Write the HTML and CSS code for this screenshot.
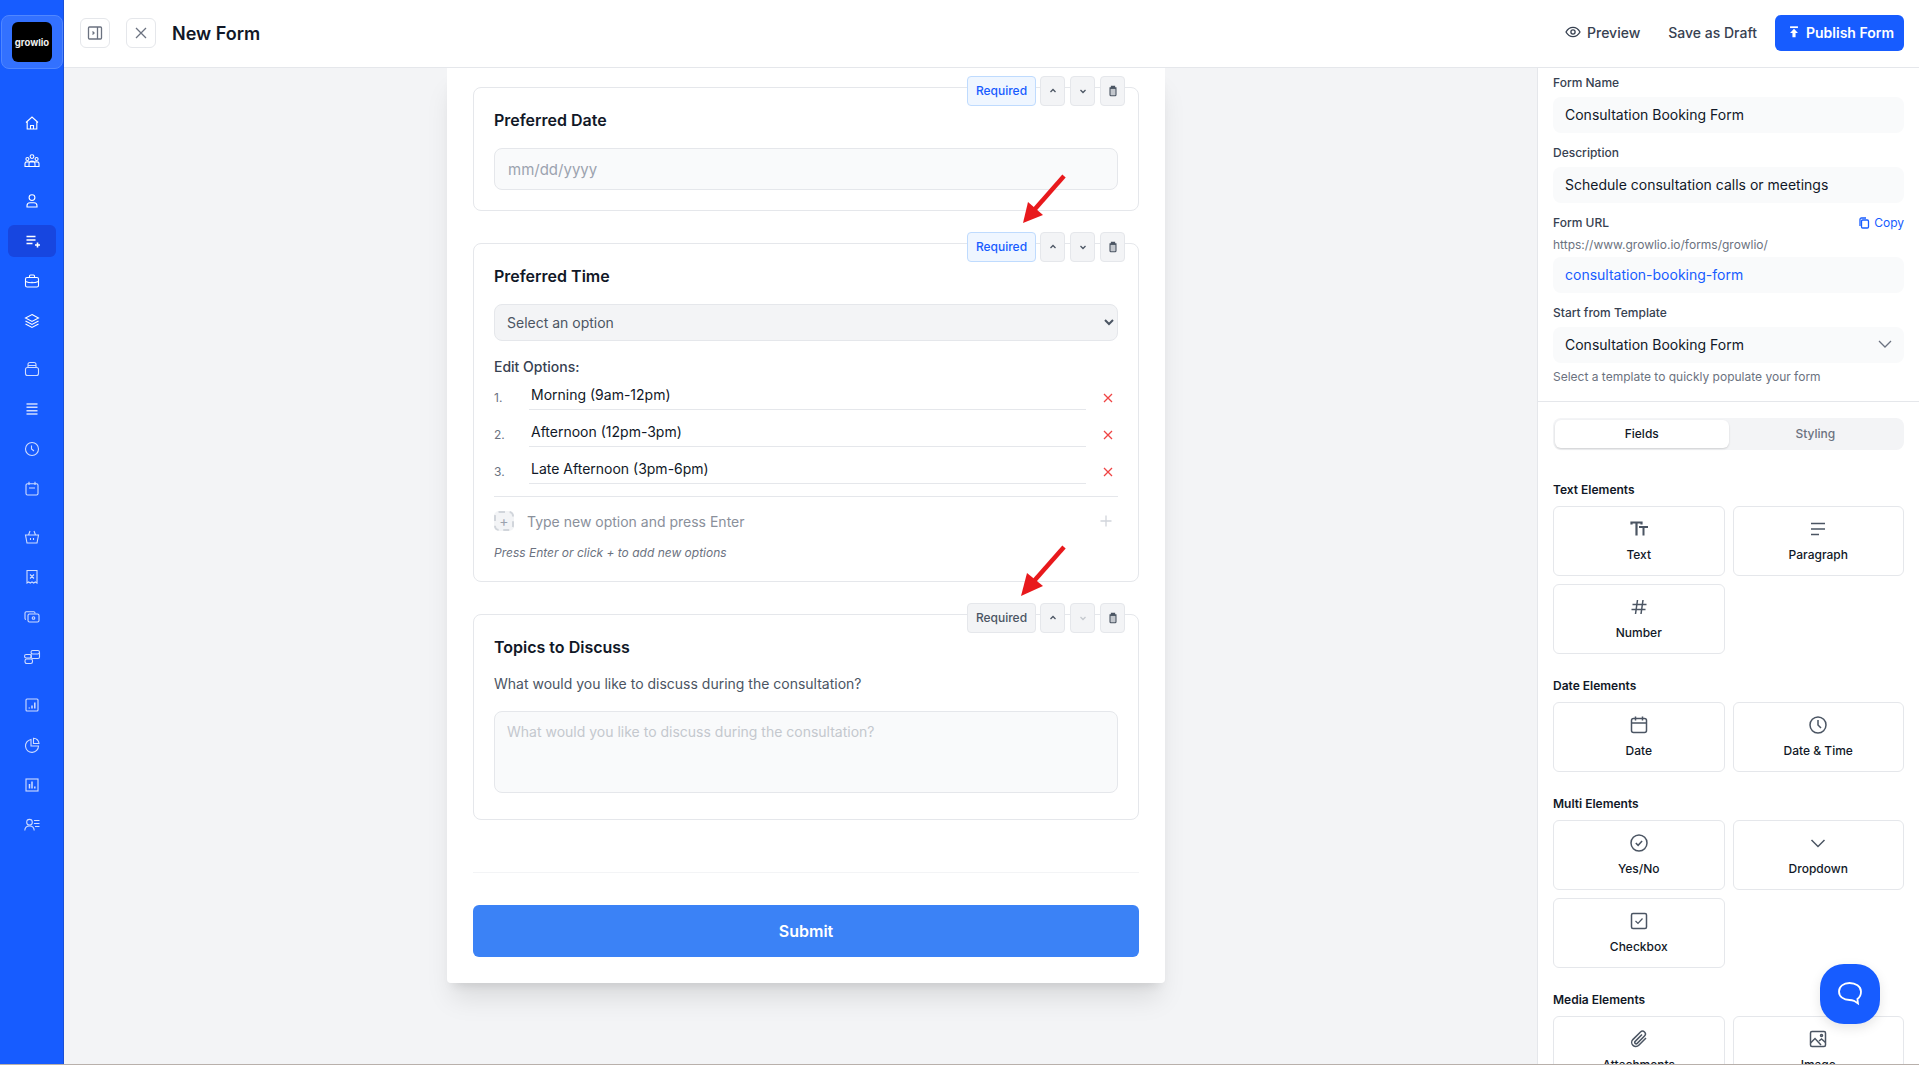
FILE: index.html
```html
<!DOCTYPE html>
<html lang="en">
<head>
    <meta charset="UTF-8">
    <meta name="viewport" content="width=device-width, initial-scale=1.0">
    <title>New Form</title>
    <link rel="stylesheet" href="styles.css">
</head>
<body>
<div class="app">
    <aside class="sidebar">
        <div class="logo-box"><div class="logo">growlio</div></div>
        <nav class="nav">
            <div class="nav-group">
                <a class="nav-item"><svg viewBox="0 -2 16 16"><path d="M2 7.500 8 2l6 5.500M3.200 6.500V14h9.600V6.500M6.500 14v-3.500h3V14"/></svg></a>
                <a class="nav-item"><svg viewBox="0 0 16 16"><circle cx="8" cy="3.600" r="1.900"/><circle cx="3.400" cy="6" r="1.500"/><circle cx="12.600" cy="6" r="1.500"/><path d="M1 13.500V10.500q0-1.600 2-1.600h10q2 0 2 1.600v3zM5 13.500v-2.200Q5 8 8 8t3 3.300v2.200"/></svg></a>
                <a class="nav-item"><svg viewBox="0 0 16 16"><circle cx="8" cy="4.600" r="2.900"/><path d="M3 14v-1.200Q3 9.800 6 9.800h4q3 0 3 3V14z"/></svg></a>
                <a class="nav-item nav-active"><svg viewBox="0 0 16 16"><path d="M2.500 3.500h9M2.500 7h9M2.500 10.500h6M11 12h5M13.500 9.500v5" stroke-width="1.600"/></svg></a>
                <a class="nav-item"><svg viewBox="0 0 16 16"><rect x="1.500" y="4.500" width="13" height="9.500" rx="1.600"/><path d="M5.500 4.500V3q0-1 1-1h3q1 0 1 1v1.500M1.500 8.500q6.500 2.500 13 0M8 8.800v1"/></svg></a>
                <a class="nav-item"><svg viewBox="0 0 16 16"><path d="M8 1.500 14.500 5 8 8.500 1.500 5zM1.500 8 8 11.500 14.500 8M1.500 11 8 14.500 14.500 11"/></svg></a>
            </div>
            <div class="nav-group nav-dim">
                <a class="nav-item"><svg viewBox="0 0 16 16"><rect x="1.500" y="6.500" width="13" height="8" rx="2"/><path d="M4 6.500V3.500q0-2 2-2h4q2 0 2 2v3M4 4.500h8"/></svg></a>
                <a class="nav-item"><svg viewBox="0 0 16 16"><path d="M2.500 3h11M2.500 6.300h11M2.500 9.700h11M2.500 13h11" stroke-width="1.500"/></svg></a>
                <a class="nav-item"><svg viewBox="0 0 16 16"><circle cx="8" cy="8" r="6.500"/><path d="M7.500 4.500V8l2.500 2"/></svg></a>
                <a class="nav-item"><svg viewBox="0 0 16 16"><rect x="2" y="2.800" width="12" height="11.200" rx="1.500"/><path d="M5 .8V4M11 .8V4M5 7h6"/></svg></a>
            </div>
            <div class="nav-group nav-dim">
                <a class="nav-item"><svg viewBox="0 0 16 16"><path d="M1.500 6h13L13 14H3zM4.500 6 6 2M11.500 6 10 2M6.500 9v2M9.500 9v2"/></svg></a>
                <a class="nav-item"><svg viewBox="0 0 16 16"><path d="M3 1.500h10V14l-1.700-1-1.600 1L8 13l-1.700 1-1.600-1L3 14zM6 5.500l4 4M6 9.500l4-4"/></svg></a>
                <a class="nav-item"><svg viewBox="0 0 16 16"><path d="M2 10.500q-1-.2-1-1V4q0-1.300 1.300-1.300h7.400Q11 2.700 11 4v.5"/><rect x="4" y="5" width="11" height="8" rx="1.500"/><circle cx="9.500" cy="9" r="1.300"/></svg></a>
                <a class="nav-item"><svg viewBox="0 0 16 16"><rect x="7" y="1.500" width="8.500" height="3.500" rx="1.700"/><path d="M7 5v3q0 1.500 1.500 1.500h5.500q1.500 0 1.500-1.500V3.500"/><rect x="0.500" y="5.500" width="7" height="3.500" rx="1.700"/><rect x="1" y="10" width="7.500" height="4.500" rx="1.700"/></svg></a>
            </div>
            <div class="nav-group nav-dim">
                <a class="nav-item"><svg viewBox="0 0 16 16"><rect x="2" y="2" width="12" height="12" rx="1"/><path d="M5.300 11.500v-1M8 11.500V8.500M10.800 11.500V5.500" stroke-width="1.500"/></svg></a>
                <a class="nav-item"><svg viewBox="0 0 16 16"><path d="M7 2.500A6.500 6.500 0 1 0 14.500 9H7z"/><path d="M9.500 1.200A5.500 5.500 0 0 1 15 6.500H9.500z"/></svg></a>
                <a class="nav-item"><svg viewBox="0 0 16 16"><rect x="2" y="2" width="12" height="12"/><path d="M5.500 11.500V7M8 11.500V4.500M10.800 11.500V9.500" stroke-width="1.500"/></svg></a>
                <a class="nav-item"><svg viewBox="0 0 16 16"><circle cx="5.500" cy="5.200" r="2.800"/><path d="M.8 13.500q.2-4.500 4.700-4.500t4.700 4.500M10 3.500h5.500M10 6.500h5.500M11 9.500h4.500" /></svg></a>
            </div>
        </nav>
    </aside>

    <div class="content">
        <header class="topbar">
            <button class="square-btn"><svg viewBox="0 0 16 16"><rect x="1.500" y="2" width="13" height="12" rx="1"/><path d="M10.500 2v12M5.500 6.500 7 8l-1.500 1.500"/></svg></button>
            <button class="square-btn close-btn"><svg viewBox="0 0 16 16"><path d="m3 3 10 10M13 3 3 13"/></svg></button>
            <h1>New Form</h1>
            <div class="top-actions">
                <a class="top-link"><svg class="eye" viewBox="0 0 16 16"><path d="M1 8q2.600-4.600 7-4.600T15 8q-2.600 4.600-7 4.600T1 8z"/><circle cx="8" cy="8" r="2.100"/></svg>Preview</a>
                <a class="top-link">Save as Draft</a>
                <button class="publish"><svg viewBox="0 0 16 16"><path d="M3.500 2.500h9" stroke-width="2"/><path class="solid" d="M8 4.300 12.500 9h-2.700v5H6.200V9H3.500z"/></svg>Publish Form</button>
            </div>
        </header>

        <div class="body-row">
            <main class="canvas">
                <form class="form-panel">
                    <section class="field-card">
                        <div class="field-tools">
                            <button type="button" class="req req-on">Required</button>
                            <button type="button" class="tool"><svg viewBox="0 0 12 12"><path d="M3.500 7 6 4.500 8.500 7"/></svg></button>
                            <button type="button" class="tool"><svg viewBox="0 0 12 12"><path d="M3.500 5 6 7.500 8.500 5"/></svg></button>
                            <button type="button" class="tool"><svg viewBox="0 0 12 12"><rect class="trash-body" x="3" y="3.200" width="6" height="7.500" rx="1"/><path d="M2.500 3h7M4.500 3V1.500h3V3"/></svg></button>
                        </div>
                        <h3>Preferred Date</h3>
                        <input class="field-input" placeholder="mm/dd/yyyy">
                    </section>

                    <section class="field-card">
                        <div class="field-tools">
                            <button type="button" class="req req-on">Required</button>
                            <button type="button" class="tool"><svg viewBox="0 0 12 12"><path d="M3.500 7 6 4.500 8.500 7"/></svg></button>
                            <button type="button" class="tool"><svg viewBox="0 0 12 12"><path d="M3.500 5 6 7.500 8.500 5"/></svg></button>
                            <button type="button" class="tool"><svg viewBox="0 0 12 12"><rect class="trash-body" x="3" y="3.200" width="6" height="7.500" rx="1"/><path d="M2.500 3h7M4.500 3V1.500h3V3"/></svg></button>
                        </div>
                        <svg class="arrow" viewBox="0 0 50 56"><path d="M44 3 15 36" stroke="#e8191c" stroke-width="4.500" fill="none"/><path d="M3 50 8 29 23 42z" fill="#e8191c"/></svg>
                        <h3>Preferred Time</h3>
                        <select class="field-select"><option>Select an option</option></select>
                        <div class="edit-label">Edit Options:</div>
                        <div class="option-row"><span class="opt-num">1.</span><input class="opt-input" value="Morning (9am-12pm)"><svg class="opt-x" viewBox="0 0 12 12"><path d="m2 2 8 8M10 2l-8 8"/></svg></div>
                        <div class="option-row"><span class="opt-num">2.</span><input class="opt-input" value="Afternoon (12pm-3pm)"><svg class="opt-x" viewBox="0 0 12 12"><path d="m2 2 8 8M10 2l-8 8"/></svg></div>
                        <div class="option-row"><span class="opt-num">3.</span><input class="opt-input" value="Late Afternoon (3pm-6pm)"><svg class="opt-x" viewBox="0 0 12 12"><path d="m2 2 8 8M10 2l-8 8"/></svg></div>
                        <div class="new-option">
                            <span class="dash-box">+</span>
                            <input class="new-input" placeholder="Type new option and press Enter">
                            <svg class="new-plus" viewBox="0 0 14 14"><path d="M7 1.500v11M1.500 7h11"/></svg>
                        </div>
                        <p class="hint-italic">Press Enter or click + to add new options</p>
                    </section>

                    <section class="field-card">
                        <div class="field-tools">
                            <button type="button" class="req">Required</button>
                            <button type="button" class="tool"><svg viewBox="0 0 12 12"><path d="M3.500 7 6 4.500 8.500 7"/></svg></button>
                            <button type="button" class="tool tool-off"><svg viewBox="0 0 12 12"><path d="M3.500 5 6 7.500 8.500 5"/></svg></button>
                            <button type="button" class="tool"><svg viewBox="0 0 12 12"><rect class="trash-body" x="3" y="3.200" width="6" height="7.500" rx="1"/><path d="M2.500 3h7M4.500 3V1.500h3V3"/></svg></button>
                        </div>
                        <svg class="arrow" viewBox="0 0 50 56"><path d="M44 3 14 37" stroke="#e8191c" stroke-width="4.500" fill="none"/><path d="M1 52 7 29 23 42z" fill="#e8191c"/></svg>
                        <h3>Topics to Discuss</h3>
                        <p class="question">What would you like to discuss during the consultation?</p>
                        <textarea class="field-area" placeholder="What would you like to discuss during the consultation?"></textarea>
                    </section>

                    <div class="form-end">
                        <button type="button" class="submit">Submit</button>
                    </div>
                </form>
            </main>

            <aside class="settings">
                <div class="settings-top">
                    <label class="set-label">Form Name</label>
                    <input class="set-input" value="Consultation Booking Form">
                    <label class="set-label">Description</label>
                    <input class="set-input" value="Schedule consultation calls or meetings">
                    <div class="set-label url-head">
                        <span>Form URL</span>
                        <a class="copy"><svg viewBox="0 0 12 12"><rect x="3.500" y="3" width="7" height="8" rx="1.200"/><path d="M2 9V2.500Q2 1 3.500 1H8"/></svg>Copy</a>
                    </div>
                    <div class="url-base">https://www.growlio.io/forms/growlio/</div>
                    <input class="set-input url-slug" value="consultation-booking-form">
                    <label class="set-label">Start from Template</label>
                    <div class="set-input template">
                        <span>Consultation Booking Form</span>
                        <svg viewBox="0 0 16 16"><path d="m2 5 6 6 6-6"/></svg>
                    </div>
                    <div class="set-hint">Select a template to quickly populate your form</div>
                </div>

                <div class="settings-lower">
                    <div class="tabs">
                        <div class="tab tab-on">Fields</div>
                        <div class="tab">Styling</div>
                    </div>

                    <h4>Text Elements</h4>
                    <div class="el-grid">
                        <div class="el-card"><svg viewBox="0 0 20 20"><path d="M2.500 5.500v-2h10v2M7.500 3.500v13" stroke-width="2.200"/><path d="M11 9V8h7v1M14.500 8v8.500" stroke-width="2"/></svg>Text</div>
                        <div class="el-card"><svg viewBox="0 0 20 20"><path d="M3 4.500h14M3 10h14M3 15.500h8" stroke-width="1.700"/></svg>Paragraph</div>
                        <div class="el-card"><svg viewBox="0 0 20 20"><path d="M3.500 7.500h14M2.500 12.500h14M8.500 3l-2 14M14 3l-2 14"/></svg>Number</div>
                    </div>

                    <h4>Date Elements</h4>
                    <div class="el-grid">
                        <div class="el-card"><svg viewBox="0 0 20 20"><rect x="2.500" y="3.500" width="15" height="14" rx="2"/><path d="M6.500 1.500v4M13.500 1.500v4M2.500 8h15M6 8h8"/></svg>Date</div>
                        <div class="el-card"><svg viewBox="0 0 20 20"><circle cx="10" cy="10" r="8"/><path d="M10 5v5l3 3"/></svg>Date &amp; Time</div>
                    </div>

                    <h4>Multi Elements</h4>
                    <div class="el-grid">
                        <div class="el-card"><svg viewBox="0 0 20 20"><circle cx="10" cy="10" r="8"/><path d="m6.800 10 2.300 2.300 4-4.300"/></svg>Yes/No</div>
                        <div class="el-card"><svg viewBox="0 0 20 20"><path d="m3.500 7 6.500 6.500L16.500 7"/></svg>Dropdown</div>
                        <div class="el-card"><svg viewBox="0 0 20 20"><rect x="2.500" y="2.500" width="15" height="15" rx="1.500"/><path d="m6.500 10 2.500 2.500 4.500-5" stroke-width="1.200"/></svg>Checkbox</div>
                    </div>

                    <h4>Media Elements</h4>
                    <div class="el-grid">
                        <div class="el-card"><svg viewBox="0 0 20 20"><path d="M17 9 9.800 16.200a4 4 0 0 1-6-5.600L11.500 3a2.800 2.800 0 0 1 4 4l-7.300 7.400a1.400 1.400 0 0 1-2-2L13 5.500"/></svg>Attachments</div>
                        <div class="el-card"><svg viewBox="0 0 20 20"><rect x="2.500" y="2.500" width="15" height="15" rx="1.500"/><path d="m2.500 14 4.500-4.500 6 6.500M11 12l2.500-2 4 3.500"/><circle cx="13.500" cy="6.500" r="1"/></svg>Image</div>
                    </div>
                </div>
            </aside>
        </div>
    </div>
</div>

<button class="chat-btn"><svg viewBox="0 0 28 28"><path d="M13.500 3C7.500 3 3 6.400 3 11.500S7.500 20 13.500 20c1.200 0 3 .2 4.500.8l4 2.700-.6-4.500c2.300-1.500 3.600-4.200 3.600-7.500C25 6.400 19.500 3 13.500 3z"/></svg></button>
</body>
</html>
```

FILE: styles.css
```css
* {
    box-sizing: border-box;
}
html, body {
    margin: 0;
    height: 100%;
    overflow: hidden;
}
body {
    font-family: Inter, "Liberation Sans", sans-serif;
    font-size: 14px;
    color: #111827;
    background: #b8b0ab;
}
button, input, select, textarea {
    font-family: inherit;
}
svg {
    fill: none;
    stroke: currentColor;
    stroke-width: 1.3;
}
h1, h3, h4, p {
    margin: 0;
}
.app {
    display: flex;
    height: calc(100vh - 1px);
    overflow: hidden;
}

/* sidebar */
.sidebar {
    width: 64px;
    flex-shrink: 0;
    background: #175cff;
    border-right: 1px solid #1a4fd6;
    padding-top: 15px;
}
.logo-box {
    margin-left: 1px;
    width: 62px;
    height: 54px;
    background: #3371ff;
    border: 1px solid #5087ff;
    border-radius: 8px;
    display: flex;
    align-items: center;
    justify-content: center;
}
.logo {
    width: 40px;
    height: 40px;
    background: #000;
    border-radius: 6px;
    color: #eee;
    font-size: 9.5px;
    font-weight: 700;
    display: flex;
    align-items: center;
    justify-content: center;
}
.nav {
    margin-top: 36px;
    display: flex;
    flex-direction: column;
    gap: 16px;
}
.nav-group {
    display: flex;
    flex-direction: column;
    gap: 8px;
}
.nav-item {
    width: 48px;
    height: 32px;
    margin-left: 8px;
    border-radius: 6px;
    display: flex;
    align-items: center;
    justify-content: center;
    color: #fff;
}
.nav-item svg {
    width: 16px;
    height: 16px;
    stroke-width: 1.1;
    overflow: visible;
}
.nav-active {
    background: #1746e0;
}
.nav-dim .nav-item {
    color: #cfdcff;
}

/* top bar */
.content {
    flex: 1;
    min-width: 0;
    display: flex;
    flex-direction: column;
}
.topbar {
    height: 68px;
    flex-shrink: 0;
    background: #fff;
    border-bottom: 1px solid #e5e7eb;
    display: flex;
    align-items: center;
    padding: 0 15px 1px 16px;
}
.square-btn {
    width: 30px;
    height: 30px;
    padding: 0;
    background: #fff;
    border: 1px solid #e5e7eb;
    border-radius: 6px;
    color: #6b7280;
    display: flex;
    align-items: center;
    justify-content: center;
}
.square-btn svg {
    width: 16px;
    height: 16px;
}
.close-btn {
    margin-left: 16px;
}
.topbar h1 {
    margin-left: 16px;
    font-size: 18px;
    font-weight: 600;
    color: #111827;
}
.top-actions {
    margin-left: auto;
    display: flex;
    align-items: center;
}
.top-link {
    display: flex;
    align-items: center;
    font-weight: 500;
    color: #374151;
    margin-right: 28px;
    padding-bottom: 2px;
}
.top-link:last-of-type {
    margin-right: 18px;
}
.eye {
    width: 16px;
    height: 16px;
    margin-right: 6px;
}
.publish {
    width: 129px;
    height: 36px;
    border: none;
    border-radius: 6px;
    background: #175cff;
    color: #fff;
    font-size: 14px;
    font-weight: 600;
    display: flex;
    align-items: center;
    padding: 0 0 2px 12px;
}
.publish svg {
    width: 14px;
    height: 14px;
    margin-right: 5px;
}
.solid {
    fill: #fff;
    stroke: none;
}

/* form canvas */
.body-row {
    flex: 1;
    min-height: 0;
    display: flex;
}
.canvas {
    flex: 1;
    min-width: 0;
    background: #f3f4f6;
    overflow: hidden;
}
.form-panel {
    width: 718px;
    margin-left: 383px;
    padding: 19px 26px 26px;
    background: #fff;
    border-radius: 0 0 4px 4px;
    box-shadow: 0 20px 25px -5px rgba(0, 0, 0, 0.1), 0 8px 10px -6px rgba(0, 0, 0, 0.1);
}
.field-card {
    position: relative;
    border: 1px solid #e5e7eb;
    border-radius: 8px;
    padding: 20px;
    margin-bottom: 32px;
}
.field-card:nth-child(3) {
    margin-bottom: 0;
}
.field-card h3 {
    font-size: 16px;
    line-height: 24px;
    font-weight: 600;
    color: #111827;
}
.field-tools {
    position: absolute;
    top: -12px;
    right: 13px;
    display: flex;
    gap: 5px;
}
.req, .tool {
    height: 30px;
    padding: 0;
    background: #f3f4f6;
    border: 1px solid #e5e7eb;
    border-radius: 4px;
    color: #4b5563;
    font-size: 12px;
    font-weight: 500;
}
.req {
    width: 69px;
    margin-right: -1px;
    padding-bottom: 2px;
}
.req-on {
    background: #eff6ff;
    border-color: #bfdbfe;
    color: #175cff;
}
.tool {
    width: 25px;
    display: flex;
    align-items: center;
    justify-content: center;
}
.tool svg {
    width: 12px;
    height: 12px;
}
.trash-body {
    fill: #c3c7cd;
    stroke-width: 1.1;
}
.tool-off {
    color: #c4c8ce;
}
.arrow {
    position: absolute;
    right: 68px;
    top: -71px;
    width: 50px;
    height: 56px;
    stroke: none;
}
.field-input, .field-select, .field-area {
    display: block;
    width: 100%;
    margin-top: 16px;
    font-size: 14px;
    border: 1px solid #e5e7eb;
    border-radius: 8px;
    background: #f9fafb;
    padding: 0 12px;
}
.field-input {
    height: 42px;
    padding-left: 13px;
    font-size: 15px;
}
.field-input::placeholder {
    color: #9ca3af;
}
.field-select {
    height: 37px;
    padding: 0 8px;
    background: #f3f4f6;
    color: #4b5563;
}
.edit-label {
    margin-top: 16px;
    line-height: 20px;
    font-size: 14px;
    font-weight: 500;
    color: #374151;
}
.option-row {
    display: flex;
    align-items: flex-end;
    margin-bottom: 4px;
}
.opt-num {
    width: 35px;
    font-size: 12px;
    line-height: 20px;
    padding-bottom: 2px;
    color: #6b7280;
    flex-shrink: 0;
}
.opt-input {
    flex: 1;
    min-width: 0;
    height: 33px;
    padding: 3px 0 1px 2px;
    border: none;
    border-bottom: 1px solid #e5e7eb;
    font-size: 14px;
    color: #111827;
    outline: none;
}
.opt-x {
    width: 12px;
    height: 12px;
    margin: 0 4px 6px 16px;
    color: #ef4444;
    flex-shrink: 0;
}
.new-option {
    display: flex;
    align-items: center;
    margin-top: 12px;
    padding-top: 14px;
    border-top: 1px solid #e5e7eb;
}
.dash-box {
    width: 20px;
    height: 20px;
    border: 2px dashed #d1d5db;
    border-radius: 5px;
    background: #f3f4f6;
    color: #9ca3af;
    font-size: 14px;
    line-height: 16px;
    text-align: center;
    flex-shrink: 0;
}
.new-input {
    flex: 1;
    min-width: 0;
    border: none;
    outline: none;
    padding: 0;
    margin-left: 13px;
    font-size: 14px;
}
.new-input::placeholder {
    color: #8a909b;
}
.new-plus {
    width: 14px;
    height: 14px;
    margin-right: 5px;
    color: #d1d5db;
}
.hint-italic {
    margin-top: 14px;
    font-size: 12px;
    line-height: 16px;
    font-style: italic;
    color: #6b7280;
}
.question {
    margin-top: 15px;
    line-height: 20px;
    color: #4b5563;
}
.field-area {
    height: 82px;
    margin: 17px 0 6px;
    padding: 11px 12px;
    resize: none;
}
.field-area::placeholder {
    color: #c4c8ce;
}
.form-end {
    margin-top: 52px;
    border-top: 1px solid #f3f4f6;
    padding-top: 32px;
}
.submit {
    display: block;
    width: 100%;
    height: 52px;
    border: none;
    border-radius: 6px;
    background: #3b82f6;
    color: #fff;
    font-size: 16px;
    font-weight: 600;
    padding-bottom: 2px;
}

/* right settings */
.settings {
    width: 382px;
    flex-shrink: 0;
    background: #fff;
    border-left: 1px solid #e5e7eb;
    overflow: hidden;
}
.settings-top {
    padding: 7px 15px 16px;
    border-bottom: 1px solid #e5e7eb;
}
.set-label {
    display: block;
    margin-top: 12px;
    margin-bottom: 6px;
    font-size: 12px;
    line-height: 16px;
    font-weight: 500;
    color: #374151;
}
.set-label:first-child {
    margin-top: 0;
}
.set-input {
    display: block;
    width: 100%;
    height: 36px;
    padding: 0 12px 2px;
    border: none;
    border-radius: 8px;
    background: #f9fafb;
    font-size: 14px;
    color: #111827;
    outline: none;
}
.url-head {
    display: flex;
    justify-content: space-between;
}
.copy {
    display: flex;
    align-items: center;
    color: #175cff;
    font-weight: 400;
}
.copy svg {
    width: 12px;
    height: 12px;
    margin-right: 4px;
}
.url-base {
    font-size: 12px;
    line-height: 16px;
    color: #6b7280;
    margin-bottom: 4px;
}
.url-slug {
    color: #175cff;
}
.template {
    display: flex;
    align-items: center;
    justify-content: space-between;
}
.template svg {
    width: 16px;
    height: 16px;
    color: #6b7280;
    margin-right: -1px;
}
.set-hint {
    margin-top: 6px;
    font-size: 12px;
    line-height: 16px;
    color: #6b7280;
}
.settings-lower {
    padding: 16px 15px 0;
}
.tabs {
    height: 32px;
    padding: 2px;
    background: #f3f4f6;
    border-radius: 8px;
    display: flex;
}
.tab {
    flex: 1;
    display: flex;
    align-items: center;
    justify-content: center;
    padding-bottom: 2px;
    font-size: 12px;
    font-weight: 500;
    color: #6b7280;
    border-radius: 6px;
}
.tab-on {
    background: #fff;
    color: #111827;
    box-shadow: 0 1px 2px rgba(0, 0, 0, 0.15);
}
.settings-lower h4 {
    margin: 24px 0 8px;
    font-size: 12px;
    line-height: 16px;
    font-weight: 600;
    color: #111827;
}
.tabs + h4 {
    margin-top: 32px;
}
.el-grid {
    display: grid;
    grid-template-columns: 1fr 1fr;
    gap: 8px;
}
.el-card {
    height: 70px;
    border: 1px solid #e5e7eb;
    border-radius: 6px;
    display: flex;
    flex-direction: column;
    align-items: center;
    padding-top: 12px;
    font-size: 12px;
    line-height: 16px;
    font-weight: 500;
    color: #111827;
}
.el-card svg {
    width: 20px;
    height: 20px;
    margin-bottom: 8px;
    color: #4b5563;
    stroke-width: 1.5;
    flex-shrink: 0;
}
.chat-btn {
    position: fixed;
    left: 1820px;
    top: 964px;
    width: 60px;
    height: 60px;
    padding: 0;
    border: none;
    border-radius: 24px;
    background: #175cff;
    color: #fff;
    box-shadow: 0 4px 12px rgba(0, 0, 0, 0.1);
    display: flex;
    align-items: center;
    justify-content: center;
}
.chat-btn svg {
    width: 28px;
    height: 28px;
    stroke-width: 1.8;
}
```
